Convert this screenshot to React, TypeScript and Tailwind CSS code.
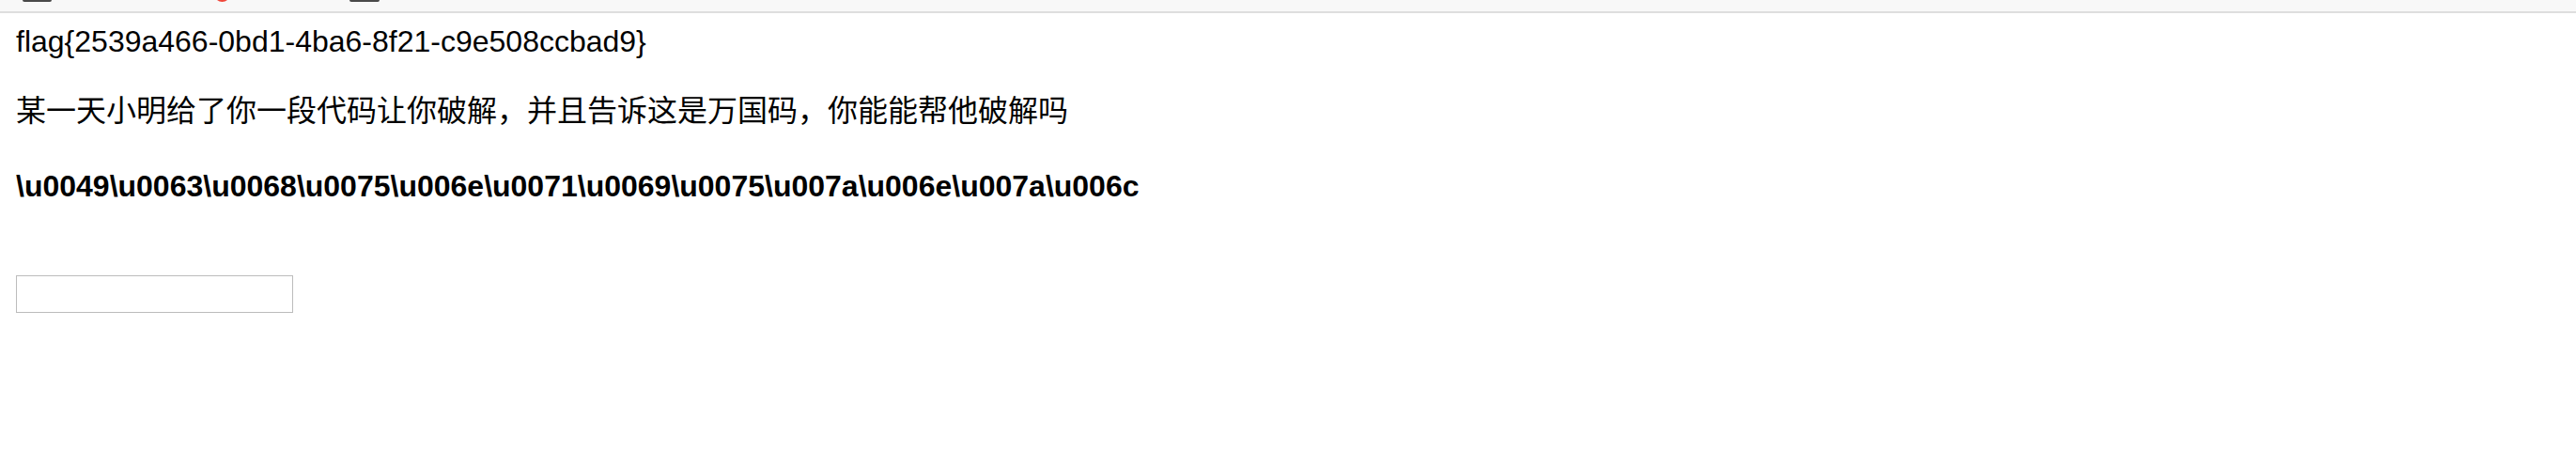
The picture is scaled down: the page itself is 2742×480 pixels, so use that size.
import React from "react";

const TopStrip: React.FC = () => (
  <div className="h-[14px] w-full shrink-0 bg-[#f8f8f8] border-b-2 border-[#dedede] flex items-start overflow-hidden">
    <div className="ml-[24px] w-[31px] h-[2px] rounded-b-[2px] bg-[#4a4a4a]" />
    <div className="ml-[173px] -mt-[15px] w-[17px] h-[17px] rounded-full bg-[#f0473a]" />
    <div className="ml-[127px] w-[32px] h-[2px] rounded-b-[2px] bg-[#4a4a4a]" />
  </div>
);

const App: React.FC = () => {
  return (
    <div
      className="w-[2742px] h-[480px] bg-white text-black flex flex-col overflow-hidden"
      style={{ fontFamily: '"Liberation Sans", Arial, "Noto Sans CJK SC", sans-serif' }}
    >
      <TopStrip />
      <div className="px-[17px] pt-[12px] text-[32px] leading-[36px]">
        <div>flag{"{"}2539a466-0bd1-4ba6-8f21-c9e508ccbad9{"}"}</div>
        <p className="mt-[38px]">
          某一天小明给了你一段代码让你破解，并且告诉这是万国码，你能能帮他破解吗
        </p>
        <p className="mt-[44px] font-bold">
          {"\\u0049\\u0063\\u0068\\u0075\\u006e\\u0071\\u0069\\u0075\\u007a\\u006e\\u007a\\u006c"}
        </p>
        <input
          type="text"
          className="mt-[77px] block w-[295px] h-[40px] border border-[#bcbcbc] bg-white outline-none"
        />
      </div>
    </div>
  );
};

export default App;
